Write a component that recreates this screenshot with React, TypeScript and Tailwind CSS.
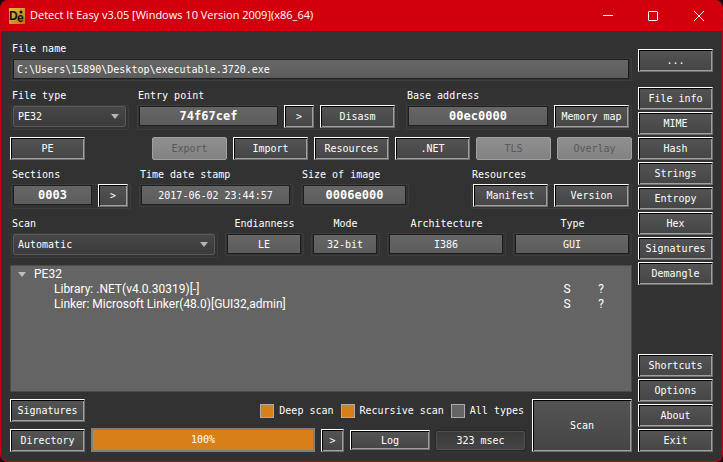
import type { ButtonHTMLAttributes, ReactNode } from "react";

function Btn({ className = "", children, ...rest }: ButtonHTMLAttributes<HTMLButtonElement>) {
  return (
    <button
      type="button"
      className={`flex shrink-0 items-center justify-center whitespace-nowrap border border-b-[#6e6e6e] border-l-white border-r-[#6e6e6e] border-t-white bg-linear-to-b from-[#545454] to-[#454545] pt-px shadow-[inset_1px_1px_0_#000,inset_-1px_-1px_0_#a0a0a0] disabled:rounded-xs disabled:border-[#a0a0a0] disabled:from-[#8f8f8f] disabled:to-[#828282] disabled:text-[#585858] disabled:shadow-none ${className}`}
      {...rest}
    >
      {children}
    </button>
  );
}

function Group({ label, htmlFor, center, className = "", children }: {
  label: string;
  htmlFor?: string;
  center?: boolean;
  className?: string;
  children: ReactNode;
}) {
  return (
    <div className={`flex flex-col ${className}`}>
      <label htmlFor={htmlFor} className={`mb-[2px] block h-[15px] pt-px leading-[14px] ${center ? "text-center" : "pl-px"}`}>
        {label}
      </label>
      <div className="flex items-start gap-[6px] rounded-xs pr-[3px] pb-[2px] pl-[2px] shadow-[inset_0_0_0_1px_#3d3d3d]">
        {children}
      </div>
    </div>
  );
}

function Field({ id, value, className = "" }: { id: string; value: string; className?: string }) {
  return (
    <input
      id={id}
      readOnly
      value={value}
      className={`mt-px h-[20px] min-w-0 flex-1 border border-[#1e1e1e] bg-linear-to-b from-[#666] to-[#5c5c5c] outline-none ${className}`}
    />
  );
}

function Combo({ id, value }: { id: string; value: string }) {
  return (
    <div className="relative mt-px mb-px min-w-0 flex-1">
      <select
        id={id}
        defaultValue={value}
        className="block h-[21px] w-full appearance-none rounded-xs border border-[#5a5a5a] bg-linear-to-b from-[#474747] to-[#3a3a3a] px-[4px] outline-none"
      >
        <option>{value}</option>
      </select>
      <svg viewBox="0 0 8 5" className="pointer-events-none absolute top-[8px] right-[7px] h-[5px] w-[8px]" aria-hidden="true">
        <path d="M0 0h8L4 5z" fill="#b4b4b4" />
      </svg>
    </div>
  );
}

function Check({ label, checked }: { label: string; checked?: boolean }) {
  return (
    <label className="flex items-center gap-[5px]">
      <input
        type="checkbox"
        defaultChecked={checked}
        className="h-[14px] w-[14px] appearance-none border border-[#acacac] bg-[#646464] checked:bg-[#d78019]"
      />
      {label}
    </label>
  );
}

const infoButtons = ["File info", "MIME", "Hash", "Strings", "Entropy", "Hex", "Signatures", "Demangle"];
const appButtons = ["Shortcuts", "Options", "About", "Exit"];
const directories = [
  { name: "Export", disabled: true },
  { name: "Import", disabled: false },
  { name: "Resources", disabled: false },
  { name: ".NET", disabled: false },
  { name: "TLS", disabled: true },
  { name: "Overlay", disabled: true },
];
const detections = ["Library: .NET(v4.0.30319)[-]", "Linker: Microsoft Linker(48.0)[GUI32,admin]"];

const std = "h-[23px] w-[75px]";

export default function App() {
  return (
    <div className="min-h-screen bg-[#1c0a0c]">
      <div className="flex min-h-screen flex-col overflow-hidden rounded-lg border border-t-0 border-[#c8000f] bg-[#323232] text-white">
        <header className="flex h-[31px] shrink-0 items-center bg-[#d2000d] pl-2 font-['Open_Sans',sans-serif] text-[11px]">
          <span className="mr-[5px] flex h-4 w-4 items-center justify-center bg-linear-to-br from-[#f0bd45] to-[#b8741a]" aria-hidden="true">
            <svg viewBox="0 0 16 16" className="h-4 w-4">
              <text x="0" y="12" fontFamily="Liberation Sans, sans-serif" fontWeight="bold" fontSize="12" fill="#111">D</text>
              <text x="8" y="14" fontFamily="Liberation Sans, sans-serif" fontWeight="bold" fontSize="12" fill="#111">e</text>
              <circle cx="12" cy="4" r="1.5" fill="#111" />
            </svg>
          </span>
          <h1 className="flex-1 whitespace-nowrap">Detect It Easy v3.05 [Windows 10 Version 2009](x86_64)</h1>
          <button type="button" aria-label="Minimize" className="flex h-full w-[45px] items-center justify-center">
            <svg viewBox="0 0 10 10" className="h-[10px] w-[10px]"><path d="M0 4.5h10" stroke="#fff" /></svg>
          </button>
          <button type="button" aria-label="Maximize" className="flex h-full w-[45px] items-center justify-center">
            <svg viewBox="0 0 10 10" className="h-[10px] w-[10px]"><rect x=".5" y=".5" width="9" height="9" rx=".5" fill="none" stroke="#fff" /></svg>
          </button>
          <button type="button" aria-label="Close" className="flex h-full w-[47px] items-center justify-center">
            <svg viewBox="0 0 10 10" className="h-[10px] w-[10px]"><path d="M0 0l10 10M10 0L0 10" stroke="#fff" /></svg>
          </button>
        </header>

        <div className="flex flex-1 gap-[6px] px-[9px] pt-[10px] pb-[9px] font-['DejaVu_Sans_Mono',monospace] text-[10px] leading-[14px]">
          <main className="flex min-w-0 flex-1 flex-col gap-[7px]">
            <Group label="File name" htmlFor="file-name" className="pl-px">
              <Field id="file-name" value="C:\Users\15890\Desktop\executable.3720.exe" className="px-[3px]" />
            </Group>

            <div className="flex gap-[8px] pl-px">
              <Group label="File type" htmlFor="file-type" className="w-[118px] shrink-0">
                <Combo id="file-type" value="PE32" />
              </Group>
              <Group label="Entry point" htmlFor="entry" className="min-w-0 flex-1">
                <Field id="entry" value="74f67cef" className="text-center text-xs font-bold" />
                <Btn className="h-[23px] w-[30px]">&gt;</Btn>
                <Btn className={std}>Disasm</Btn>
              </Group>
              <Group label="Base address" htmlFor="base" className="w-[226px] shrink-0">
                <Field id="base" value="00ec0000" className="text-center text-xs font-bold" />
                <Btn className={std}>Memory map</Btn>
              </Group>
            </div>

            <div className="flex gap-[6px]">
              <Btn className={`mr-auto ${std}`}>PE</Btn>
              {directories.map((d) => (
                <Btn key={d.name} disabled={d.disabled} className={std}>{d.name}</Btn>
              ))}
            </div>

            <div className="flex gap-[8px] pl-px">
              <Group label="Sections" htmlFor="sections" className="w-[120px]">
                <Field id="sections" value="0003" className="text-center text-xs font-bold" />
                <Btn className="h-[23px] w-[30px]">&gt;</Btn>
              </Group>
              <Group label="Time date stamp" htmlFor="stamp" className="w-[154px]">
                <Field id="stamp" value="2017-06-02 23:44:57" className="text-center" />
              </Group>
              <Group label="Size of image" htmlFor="size" className="w-[108px]">
                <Field id="size" value="0006e000" className="text-center text-xs font-bold" />
              </Group>
              <Group label="Resources" className="ml-auto">
                <Btn className={std}>Manifest</Btn>
                <Btn className={std}>Version</Btn>
              </Group>
            </div>

            <div className="flex gap-[7px] pl-px">
              <Group label="Scan" htmlFor="engine" className="flex-1">
                <Combo id="engine" value="Automatic" />
              </Group>
              <Group label="Endianness" htmlFor="endian" center className="w-[79px]">
                <Field id="endian" value="LE" className="text-center" />
              </Group>
              <Group label="Mode" htmlFor="mode" center className="w-[69px]">
                <Field id="mode" value="32-bit" className="text-center" />
              </Group>
              <Group label="Architecture" htmlFor="arch" center className="w-[119px]">
                <Field id="arch" value="I386" className="text-center" />
              </Group>
              <Group label="Type" htmlFor="type" center className="w-[119px]">
                <Field id="type" value="GUI" className="text-center" />
              </Group>
            </div>

            <div className="flex-1 border border-[#4b4b4b] bg-[#646464] pt-px font-[Roboto,sans-serif] text-xs leading-[15px]">
              <table className="w-full border-collapse">
                <tbody>
                  <tr className="h-[15px]">
                    <td colSpan={3} className="p-0">
                      <span className="flex items-center pl-[7px]">
                        <svg viewBox="0 0 8 5" className="mr-[8px] h-[5px] w-[8px]" aria-hidden="true">
                          <path d="M0 0h8L4 5z" fill="#bdbdbd" />
                        </svg>
                        PE32
                      </span>
                    </td>
                  </tr>
                  {detections.map((text) => (
                    <tr key={text} className="h-[15px]">
                      <td className="p-0 pl-[43px]">{text}</td>
                      <td className="w-[34px] p-0 text-center">S</td>
                      <td className="w-[47px] p-0 pr-[13px] text-center">?</td>
                    </tr>
                  ))}
                </tbody>
              </table>
            </div>

            <div className="flex gap-[7px]">
              <div className="flex min-w-0 flex-1 flex-col gap-[6px]">
                <div className="flex items-center justify-between">
                  <Btn className={std}>Signatures</Btn>
                  <div className="flex gap-[7px] pr-px">
                    <Check label="Deep scan" checked />
                    <Check label="Recursive scan" checked />
                    <Check label="All types" />
                  </div>
                </div>
                <div className="flex items-center gap-[6px]">
                  <Btn className={std}>Directory</Btn>
                  <div
                    role="progressbar"
                    aria-valuenow={100}
                    className="flex h-[24px] flex-1 items-center justify-center border-2 border-[#808080] bg-[#d78019]"
                  >
                    100%
                  </div>
                  <Btn className="h-[23px] w-[23px]">&gt;</Btn>
                  <Btn className="h-[20px] w-[80px]">Log</Btn>
                  <button type="button" className="h-[19px] w-[89px] rounded-xs border border-[#505050] bg-linear-to-b from-[#3a3a3a] to-[#444] leading-[17px] shadow-[0_0_0_1px_#282828]">
                    323 msec
                  </button>
                </div>
              </div>
              <Btn className="w-[100px]">Scan</Btn>
            </div>
          </main>

          <aside className="flex flex-col justify-between pt-[8px]">
            <div className="flex flex-col gap-[2px]">
              <Btn className={`mb-[13px] ${std}`} aria-label="Browse">...</Btn>
              {infoButtons.map((name) => (
                <Btn key={name} className={std}>{name}</Btn>
              ))}
            </div>
            <div className="flex flex-col gap-[2px]">
              {appButtons.map((name) => (
                <Btn key={name} className={std}>{name}</Btn>
              ))}
            </div>
          </aside>
        </div>
      </div>
    </div>
  );
}
